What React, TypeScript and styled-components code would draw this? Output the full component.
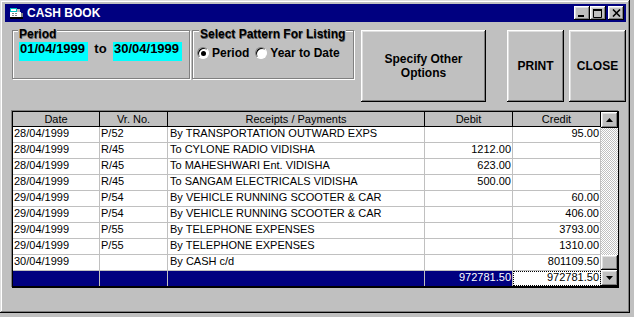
import React from "react"
import styled, { createGlobalStyle } from 'styled-components'

const GlobalStyle = createGlobalStyle`
  body {
    margin: 0;
    background: #c0c0c0;
    font-family: "Liberation Sans", Arial, sans-serif;
  }`

const raised = `box-shadow: inset -1px -1px #000, inset 1px 1px #fff, inset -2px -2px #808080, inset 2px 2px #dfdfdf;`

const Window = styled.div`
    width: 630px;
    height: 313px;
    box-sizing: border-box;
    padding: 4px 4px 0 5px;
    background: #c0c0c0;
    box-shadow: inset -1px -1px #000, inset 1px 1px #dfdfdf, inset -2px -2px #808080, inset 2px 2px #fff;`

const TitleBar = styled.div`
    height: 18px;
    background: #000080;
    display: flex;
    align-items: center;
    padding: 0 2px 0 4px;
    color: #fff;
    font-weight: bold;
    font-size: 12px;`

const TitleText = styled.span`
    margin-left: 3px;
    flex: 1;`

const TitleButton = styled.div<{ $gap?: number }>`
    width: 16px;
    height: 14px;
    background: #c0c0c0;
    margin-left: ${p => p.$gap || 0}px;
    display: flex;
    align-items: center;
    justify-content: center;
    ${raised}`

const Body = styled.div`
    padding: 8px 0 0 7px;`

const TopRow = styled.div`
    display: flex;
    align-items: flex-start;`

const Group = styled.div<{ $w: number; $pad: number; $ml?: number }>`
    width: ${p => p.$w}px;
    height: 49px;
    box-sizing: border-box;
    margin-left: ${p => p.$ml || 0}px;
    border: 1px solid #808080;
    box-shadow: inset 1px 1px #fff, 1px 1px #fff;
    padding: 0 0 0 ${p => p.$pad}px;
    display: flex;
    flex-direction: column;
    align-items: flex-start;`

const Caption = styled.span<{ $ml?: number }>`
    margin: -3px 0 0 ${p => p.$ml || 0}px;
    padding: 0 1px;
    background: #c0c0c0;
    font-size: 12px;
    font-weight: bold;
    line-height: 12px;
    color: #000;
    text-shadow: 0.5px 0.5px #606060;`

const DateRow = styled.div`
    display: flex;
    align-items: flex-start;
    margin: 2px 0 0 1px;`

const DateField = styled.div`
    width: 69px;
    height: 19px;
    background: #00ffff;
    font-size: 13px;
    font-weight: bold;
    line-height: 14px;
    padding-left: 1px;
    box-sizing: border-box;`

const ToText = styled.span`
    width: 25px;
    text-align: center;
    font-size: 13px;
    font-weight: bold;
    line-height: 14px;`

const RadioRow = styled.div`
    display: flex;
    align-items: center;
    margin-top: 6px;
    font-size: 12px;
    font-weight: bold;`

const RadioItem = styled.label`
    display: flex;
    align-items: center;
    gap: 3px;
    margin-right: 6px;`

const RadioCircle = styled.span<{ $on?: boolean }>`
    width: 12px;
    height: 12px;
    box-sizing: border-box;
    border-radius: 50%;
    background: #fff;
    border: 1px solid;
    border-color: #808080 #fff #fff #808080;
    box-shadow: inset 1px 1px #000;
    display: flex;
    align-items: center;
    justify-content: center;
    &::after {
      content: '';
      width: 5px;
      height: 5px;
      border-radius: 50%;
      background: ${p => p.$on ? '#000' : 'transparent'};
    }`

const Button = styled.button<{ $w: number; $ml: number }>`
    width: ${p => p.$w}px;
    height: 72px;
    margin-left: ${p => p.$ml}px;
    border: none;
    background: #c0c0c0;
    font-family: "Liberation Sans", Arial, sans-serif;
    font-size: 12px;
    font-weight: bold;
    line-height: 14px;
    color: #000;
    padding: 0;
    ${raised}`

const Frame = styled.div`
    margin-top: 9px;
    width: 607px;
    box-sizing: border-box;
    border: 1px solid #000;
    border-bottom-width: 2px;
    box-shadow: -1px -1px 0 #808080;`

const Grid = styled.div`
    display: grid;
    grid-template-columns: 87px 68px 257px 88px 88px 17px;
    grid-template-rows: 15px repeat(9, 16px) 15px;
    background: #fff;
    font-size: 11px;`

const Head = styled.div`
    background: #c0c0c0;
    box-sizing: border-box;
    border-right: 1px solid #000;
    border-bottom: 1px solid #000;
    text-align: center;
    line-height: 14px;`

const Cell = styled.div<{ $right?: boolean; $pl?: number; $mode?: 'navy' | 'focus' }>`
    box-sizing: border-box;
    border-right: 1px solid #c0c0c0;
    border-bottom: ${p => p.$mode ? 'none' : '1px solid #c0c0c0'};
    padding: 0 1px 0 ${p => p.$pl ?? 1}px;
    text-align: ${p => p.$right ? 'right' : 'left'};
    line-height: 13px;
    white-space: nowrap;
    overflow: hidden;
    background: ${p => p.$mode === 'navy' ? '#000080' : '#fff'};
    color: ${p => p.$mode === 'navy' ? '#fff' : '#000'};
    ${p => p.$mode === 'focus' ? 'outline: 1px dotted #000; outline-offset: -1px;' : ''}`

const ScrollBar = styled.div`
    grid-column: 6;
    grid-row: 1 / -1;
    display: flex;
    flex-direction: column;
    background: #c0c0c0;`

const ScrollButton = styled.div<{ $h?: number }>`
    height: ${p => p.$h || 16}px;
    background: #c0c0c0;
    display: flex;
    align-items: center;
    justify-content: center;
    ${raised}`

const Track = styled.div`
    flex: 1;
    background-color: #fff;
    background-image: repeating-conic-gradient(#c0c0c0 0 25%, #fff 0 50%);
    background-size: 2px 2px;`

const rows = [
  ['28/04/1999', 'P/52', 'By TRANSPORTATION OUTWARD EXPS', '', '95.00'],
  ['28/04/1999', 'R/45', 'To CYLONE RADIO VIDISHA', '1212.00', ''],
  ['28/04/1999', 'R/45', 'To MAHESHWARI Ent. VIDISHA', '623.00', ''],
  ['28/04/1999', 'R/45', 'To SANGAM ELECTRICALS VIDISHA', '500.00', ''],
  ['29/04/1999', 'P/54', 'By VEHICLE RUNNING SCOOTER & CAR', '', '60.00'],
  ['29/04/1999', 'P/54', 'By VEHICLE RUNNING SCOOTER & CAR', '', '406.00'],
  ['29/04/1999', 'P/55', 'By TELEPHONE EXPENSES', '', '3793.00'],
  ['29/04/1999', 'P/55', 'By TELEPHONE EXPENSES', '', '1310.00'],
  ['30/04/1999', '', 'By CASH c/d', '', '801109.50'],
]

function AppIcon() {
  return (
    <svg width="15" height="13" viewBox="0 0 15 13">
      <rect x="1" y="1" width="7" height="4" fill="#00c0c0" />
      <rect x="2" y="2" width="5" height="2" fill="#fff" />
      <path d="M1 5 H12 V10 H1 Z" fill="#fff" />
      <path d="M8 2 H11 V5 H8 Z" fill="#c0c0c0" />
      <rect x="3" y="6" width="2" height="1" fill="#808080" />
      <rect x="6" y="6" width="2" height="1" fill="#808080" />
      <rect x="3" y="8" width="2" height="1" fill="#808080" />
      <rect x="6" y="8" width="2" height="1" fill="#808080" />
      <rect x="1" y="10" width="13" height="2" fill="#000" />
      <rect x="12" y="6" width="2" height="4" fill="#808080" />
    </svg>
  )
}

function Arrow({ up }: { up?: boolean }) {
  return (
    <svg width="7" height="4" viewBox="0 0 7 4">
      <path d={up ? "M3.5 0 L7 4 L0 4 Z" : "M0 0 L7 0 L3.5 4 Z"} fill="#000" />
    </svg>
  )
}

function App() {
  return (
    <React.Fragment>
      <GlobalStyle />
      <Window>
        <TitleBar>
          <AppIcon />
          <TitleText>CASH BOOK</TitleText>
          <TitleButton>
            <svg width="10" height="9" viewBox="0 0 10 9"><rect x="1" y="6" width="6" height="2" fill="#000" /></svg>
          </TitleButton>
          <TitleButton>
            <svg width="10" height="9" viewBox="0 0 10 9"><path d="M0.5 1.5 H8.5 V8.5 H0.5 Z" fill="none" stroke="#000" /><rect x="0" y="0" width="9" height="2" fill="#000" /></svg>
          </TitleButton>
          <TitleButton $gap={2}>
            <svg width="9" height="8" viewBox="0 0 9 8"><path d="M1 0.5 L8 7.5 M8 0.5 L1 7.5" stroke="#000" strokeWidth="1.6" /></svg>
          </TitleButton>
        </TitleBar>
        <Body>
          <TopRow>
            <Group $w={178} $pad={5}>
              <Caption>Period</Caption>
              <DateRow>
                <DateField>01/04/1999</DateField>
                <ToText>to</ToText>
                <DateField>30/04/1999</DateField>
              </DateRow>
            </Group>
            <Group $w={162} $pad={4} $ml={2}>
              <Caption $ml={2}>Select Pattern For Listing</Caption>
              <RadioRow>
                <RadioItem><RadioCircle $on />Period</RadioItem>
                <RadioItem><RadioCircle />Year to Date</RadioItem>
              </RadioRow>
            </Group>
            <Button $w={125} $ml={7}>Specify Other<br />Options</Button>
            <Button $w={57} $ml={21}>PRINT</Button>
            <Button $w={57} $ml={5}>CLOSE</Button>
          </TopRow>
          <Frame>
            <Grid>
              <Head>Date</Head>
              <Head>Vr. No.</Head>
              <Head>Receipts / Payments</Head>
              <Head>Debit</Head>
              <Head>Credit</Head>
              <ScrollBar>
                <ScrollButton><Arrow up /></ScrollButton>
                <Track />
                <ScrollButton $h={15} />
                <ScrollButton><Arrow /></ScrollButton>
              </ScrollBar>
              {rows.map((r, i) => (
                <React.Fragment key={i}>
                  <Cell>{r[0]}</Cell>
                  <Cell>{r[1]}</Cell>
                  <Cell $pl={2}>{r[2]}</Cell>
                  <Cell $right>{r[3]}</Cell>
                  <Cell $right>{r[4]}</Cell>
                </React.Fragment>
              ))}
              <Cell $mode="navy" />
              <Cell $mode="navy" />
              <Cell $mode="navy" />
              <Cell $mode="navy" $right>972781.50</Cell>
              <Cell $mode="focus" $right>972781.50</Cell>
            </Grid>
          </Frame>
        </Body>
      </Window>
    </React.Fragment>
  )
}

export default App
